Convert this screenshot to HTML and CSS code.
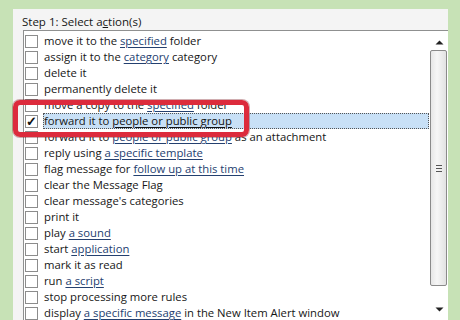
FILE: index.html
```html
<!DOCTYPE html>
<html lang="en">

<head>
  <meta charset="UTF-8" />
  <title>Rules Wizard - Select action(s)</title>
  <link rel="stylesheet" href="styles.css">
</head>

<body>
  <div class="dialog">
    <p class="title">Step 1: Select a<u>c</u>tion(s)</p>

    <div class="listbox">
      <ul class="rows">
        <li class="row"><span class="check"></span><span class="label">move it to the <a class="link">specified</a> folder</span></li>
        <li class="row"><span class="check"></span><span class="label">assign it to the <a class="link">category</a> category</span></li>
        <li class="row"><span class="check"></span><span class="label">delete it</span></li>
        <li class="row"><span class="check"></span><span class="label">permanently delete it</span></li>
        <li class="row"><span class="check"></span><span class="label">move a copy to the <a class="link">specified</a> folder</span></li>
        <li class="row selected"><span class="check checked">&#10003;</span><span class="label">forward it to <a class="link">people or public group</a></span></li>
        <li class="row"><span class="check"></span><span class="label">forward it to <a class="link">people or public group</a> as an attachment</span></li>
        <li class="row"><span class="check"></span><span class="label">reply using <a class="link">a specific template</a></span></li>
        <li class="row"><span class="check"></span><span class="label">flag message for <a class="link">follow up at this time</a></span></li>
        <li class="row"><span class="check"></span><span class="label">clear the Message Flag</span></li>
        <li class="row"><span class="check"></span><span class="label">clear message's categories</span></li>
        <li class="row"><span class="check"></span><span class="label">print it</span></li>
        <li class="row"><span class="check"></span><span class="label">play <a class="link">a sound</a></span></li>
        <li class="row"><span class="check"></span><span class="label">start <a class="link">application</a></span></li>
        <li class="row"><span class="check"></span><span class="label">mark it as read</span></li>
        <li class="row"><span class="check"></span><span class="label">run <a class="link">a script</a></span></li>
        <li class="row"><span class="check"></span><span class="label">stop processing more rules</span></li>
        <li class="row"><span class="check"></span><span class="label">display <a class="link">a specific message</a> in the New Item Alert window</span></li>
      </ul>

      <div class="scrollbar">
        <svg class="arrow" width="9" height="5" viewBox="0 0 9 5"><path d="M0.5 4.5 L4.5 0.5 L8.5 4.5 Z" fill="#222" /></svg>
        <div class="thumb">
          <span class="grip"></span>
        </div>
        <svg class="arrow" width="9" height="5" viewBox="0 0 9 5"><path d="M0.5 0.5 L4.5 4.5 L8.5 0.5 Z" fill="#222" /></svg>
      </div>
    </div>
  </div>

  <!-- callout drawn over the list -->
  <div class="callout"></div>
</body>

</html>
```

FILE: styles.css
```css
body {
  margin: 0;
  padding: 0;
  background-color: #c7e2b6;
  font-family: "Open Sans", "Noto Sans", sans-serif;
  font-size: 11.3px;
  color: #161616;
  overflow: hidden;
  height: 320px;
  position: relative;
}

.dialog {
  margin: 9px 0 0 13px;
  width: 435px;
  height: 320px;
  background-color: #f4f4f4;
  padding: 6px 0 0 9px;
  box-sizing: border-box;
}

.title {
  margin: 0 0 1px 0;
  height: 14px;
  line-height: 14px;
  font-size: 11.5px;
}

.title u {
  text-decoration-thickness: 1px;
}

.listbox {
  margin-left: 1px;
  display: flex;
  background-color: #fff;
  border-top: 1px solid #8f9090;
  border-left: 1px solid #8f9090;
  height: 300px;
}

.rows {
  list-style: none;
  margin: 0;
  padding: 2px 0 0 1px;
  flex: 1;
}

.row {
  height: 16px;
  display: flex;
  align-items: center;
  white-space: nowrap;
}

.check {
  width: 11px;
  height: 11px;
  border: 1px solid #8c8c8c;
  background-color: #fff;
  margin-right: 5px;
  flex-shrink: 0;
  font-size: 13px;
  line-height: 11px;
  text-align: center;
  font-weight: bold;
  color: #111;
}

.label {
  height: 16px;
  line-height: 16px;
  padding-left: 1px;
}

.link {
  color: #24406f;
  text-decoration: underline;
  text-underline-offset: 2px;
}

.selected .label {
  flex: 1;
  background-color: #c8e0f6;
  outline: 1px dotted #555;
  outline-offset: -1px;
}

.selected .link {
  color: #111;
}

.scrollbar {
  width: 19px;
  display: flex;
  flex-direction: column;
  align-items: center;
  padding-top: 9px;
  box-sizing: border-box;
}

.arrow {
  display: block;
  margin-left: 1px;
}

.thumb {
  margin-top: 5px;
  width: 15px;
  height: 234px;
  border: 1px solid #8a8a8a;
  border-radius: 2px;
  background: linear-gradient(to right, #e6e6e6, #f6f6f6 40%, #e2e2e2);
  display: flex;
  align-items: center;
  justify-content: center;
  margin-bottom: 21px;
}

.grip {
  width: 6px;
  height: 5px;
  border-top: 1px solid #555;
  border-bottom: 1px solid #555;
  position: relative;
}

.grip::after {
  content: "";
  position: absolute;
  left: 0;
  right: 0;
  top: 2px;
  border-top: 1px solid #555;
}

.callout {
  position: absolute;
  left: 13px;
  top: 100px;
  width: 236px;
  height: 37px;
  border: 5px solid #dc2b3c;
  border-radius: 7px;
  box-sizing: border-box;
  box-shadow: 0 0 0 1px rgba(120, 20, 30, 0.35);
}
```
